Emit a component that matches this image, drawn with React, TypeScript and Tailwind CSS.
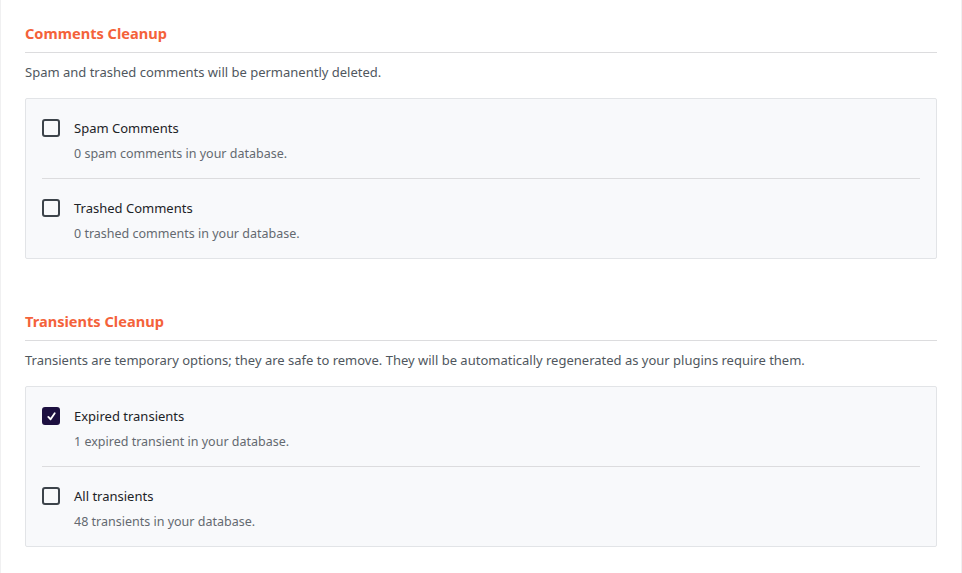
import { useState } from 'react';

type Item = { id: string; label: string; detail: string; checked: boolean };

const SECTIONS: { title: string; description: string; items: Item[] }[] = [
  {
    title: 'Comments Cleanup',
    description: 'Spam and trashed comments will be permanently deleted.',
    items: [
      { id: 'spam', label: 'Spam Comments', detail: '0 spam comments in your database.', checked: false },
      { id: 'trash', label: 'Trashed Comments', detail: '0 trashed comments in your database.', checked: false },
    ],
  },
  {
    title: 'Transients Cleanup',
    description:
      'Transients are temporary options; they are safe to remove. They will be automatically regenerated as your plugins require them.',
    items: [
      { id: 'expired', label: 'Expired transients', detail: '1 expired transient in your database.', checked: true },
      { id: 'all', label: 'All transients', detail: '48 transients in your database.', checked: false },
    ],
  },
];

function Checkbox({ checked, onChange }: { checked: boolean; onChange: () => void }) {
  return (
    <button
      type="button"
      onClick={onChange}
      className={`flex h-[18px] w-[18px] shrink-0 items-center justify-center rounded-[3px] border-2 ${
        checked ? 'border-[#1d1040] bg-[#1d1040]' : 'border-[#3c434a] bg-transparent'
      }`}
    >
      {checked && (
        <svg viewBox="0 0 12 12" className="h-[11px] w-[11px]" fill="none" stroke="white" strokeWidth="2" strokeLinecap="round" strokeLinejoin="round">
          <path d="M2.5 6.5 L5 9 L9.5 2.5" />
        </svg>
      )}
    </button>
  );
}

export default function App() {
  const [state, setState] = useState<Record<string, boolean>>(() =>
    Object.fromEntries(SECTIONS.flatMap((s) => s.items.map((i) => [i.id, i.checked])))
  );

  return (
    <div className="min-h-[573px] w-[962px] border-l border-r border-[#f0f0f1] bg-white px-[24px] pt-[22px] font-['Noto_Sans',sans-serif]">
      {SECTIONS.map((section, idx) => (
        <section key={section.title} className={idx > 0 ? 'mt-[51px]' : ''}>
          <h2 className="border-b border-[#dcdcde] pb-[8px] text-[14.6px] font-bold leading-[22px] text-[#f4623a]">
            {section.title}
          </h2>
          <p className="mt-[9px] text-[13px] leading-[20px] text-[#50575e]">{section.description}</p>
          <div className="mt-[16px] rounded-[2px] border border-[#e2e4e7] bg-[#f8f9fb] px-[16px]">
            {section.items.map((item, i) => (
              <div
                key={item.id}
                className={`pt-[19px] ${i === 0 ? 'border-b border-[#dcdcde] pb-[15px]' : 'pb-[15px]'}`}
              >
                <label className="flex items-center gap-[14px]">
                  <Checkbox
                    checked={state[item.id]}
                    onChange={() => setState((s) => ({ ...s, [item.id]: !s[item.id] }))}
                  />
                  <span className="text-[13px] leading-[20px] text-[#1d2327]">{item.label}</span>
                </label>
                <p className="ml-[32px] mt-[7px] text-[12.5px] leading-[18px] text-[#646970]">{item.detail}</p>
              </div>
            ))}
          </div>
        </section>
      ))}
    </div>
  );
}
